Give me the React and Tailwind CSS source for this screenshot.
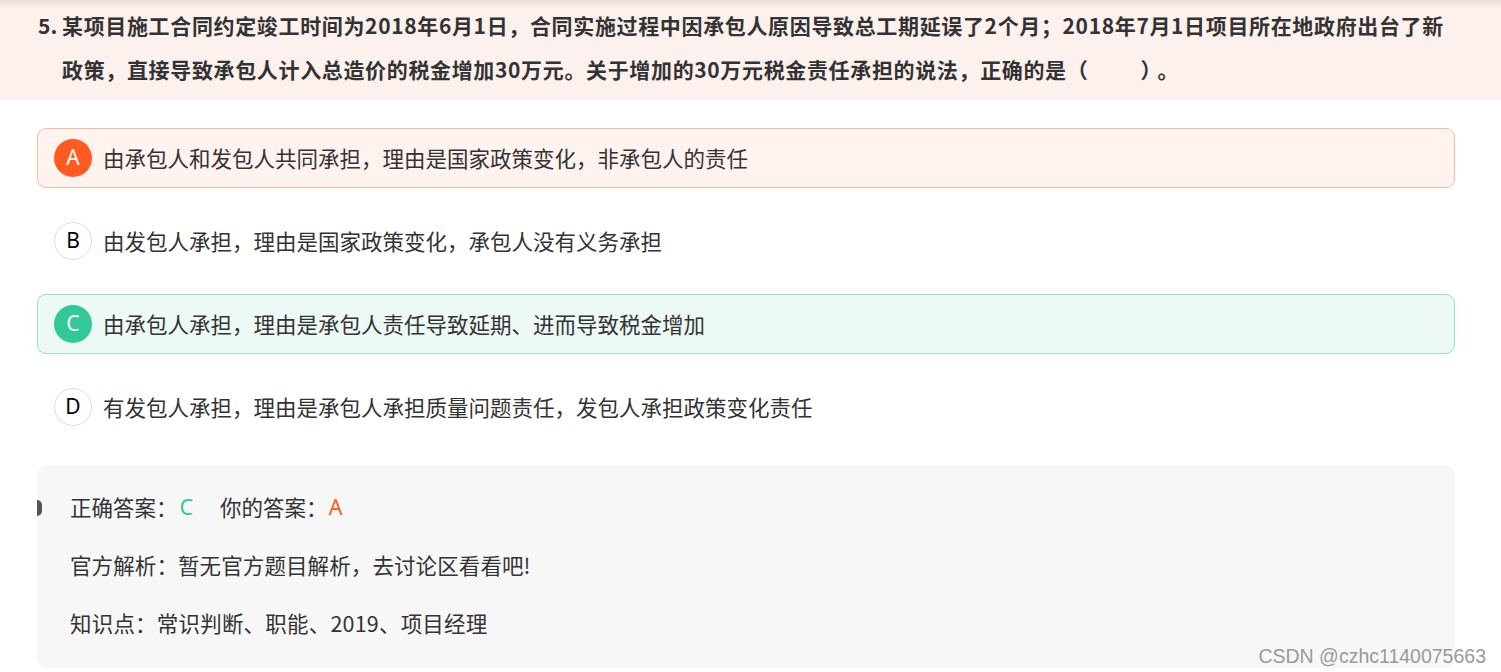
const options = [
  { key: 'A', text: '由承包人和发包人共同承担，理由是国家政策变化，非承包人的责任', state: 'wrong' },
  { key: 'B', text: '由发包人承担，理由是国家政策变化，承包人没有义务承担', state: 'none' },
  { key: 'C', text: '由承包人承担，理由是承包人责任导致延期、进而导致税金增加', state: 'right' },
  { key: 'D', text: '有发包人承担，理由是承包人承担质量问题责任，发包人承担政策变化责任', state: 'none' },
];

const boxStyles = {
  wrong: 'border border-[#fcb9a2] bg-[#fff3f0]',
  right: 'border border-[#93e2c6] bg-[#edf9f5]',
  none: 'border border-transparent',
};

const dotStyles = {
  wrong: 'bg-[#ff5a1f] text-white',
  right: 'bg-[#33c897] text-white',
  none: 'bg-white border border-[#dcdcdc] text-black',
};

export default function App() {
  return (
    <div className="w-[1501px] h-[672px] overflow-hidden bg-white text-[#333] font-['Microsoft_YaHei','Noto_Sans_CJK_SC',sans-serif] relative">
      {/* Question stem */}
      <div className="h-[100px] bg-[#fdf1ee] bg-gradient-to-b from-[#ecdcd8] via-[#fdf1ee] via-[8%] to-[#fdf1ee] flex pl-[38px] pr-[20px] pt-[3px]">
        <span className="text-[21px] font-bold leading-[44px] shrink-0 w-[24px]">5.</span>
        <div className="text-[21px] font-bold leading-[44px] tracking-[0.65px] whitespace-nowrap">
          某项目施工合同约定竣工时间为2018年6月1日，合同实施过程中因承包人原因导致总工期延误了2个月；2018年7月1日项目所在地政府出台了新
          <br />
          政策，直接导致承包人计入总造价的税金增加30万元。关于增加的30万元税金责任承担的说法，正确的是（<span className="inline-block w-[52px]" />）<span className="ml-[6px]">。</span>
        </div>
      </div>

      {/* Options */}
      <div className="pl-[37px] pr-[46px] pt-[28px] flex flex-col gap-[23px]">
        {options.map(o => (
          <div key={o.key} className={`h-[60px] rounded-[9px] flex items-center pl-[16px] gap-[11px] ${boxStyles[o.state]}`}>
            <span className={`w-[38px] h-[38px] rounded-full flex items-center justify-center text-[21px] font-['Noto_Sans',sans-serif] ${dotStyles[o.state]}`}>
              {o.key}
            </span>
            <span className="text-[21.5px] text-[#333]">{o.text}</span>
          </div>
        ))}
      </div>

      {/* Analysis */}
      <div className="mx-[37px] mt-[28px] w-[1418px] h-[203px] bg-[#f7f7f7] rounded-[10px] relative pl-[33px] pt-[26px] flex flex-col gap-[26px]">
        <span className="absolute left-0 top-[35px] w-[5px] h-[16px] bg-[#555] rounded-r-full" />
        <div className="text-[21.5px] leading-[32px] flex items-center">
          正确答案：<span className="text-[#33c897] font-['Noto_Sans',sans-serif] ml-[2px]">C</span>
          <span className="ml-[27px]">你的答案：</span>
          <span className="text-[#ff5a1f] font-['Noto_Sans',sans-serif] ml-[1px]">A</span>
        </div>
        <div className="text-[21.5px] leading-[32px] tracking-[0.1px]">官方解析：暂无官方题目解析，去讨论区看看吧!</div>
        <div className="text-[21.5px] leading-[32px] tracking-[0.2px]">知识点：常识判断、职能、2019、项目经理</div>
      </div>

      <span className="absolute right-[15px] top-[642px] text-[19.5px] text-[#9a9a9a] font-['Liberation_Sans',sans-serif]">
        CSDN @czhc1140075663
      </span>
    </div>
  );
}
